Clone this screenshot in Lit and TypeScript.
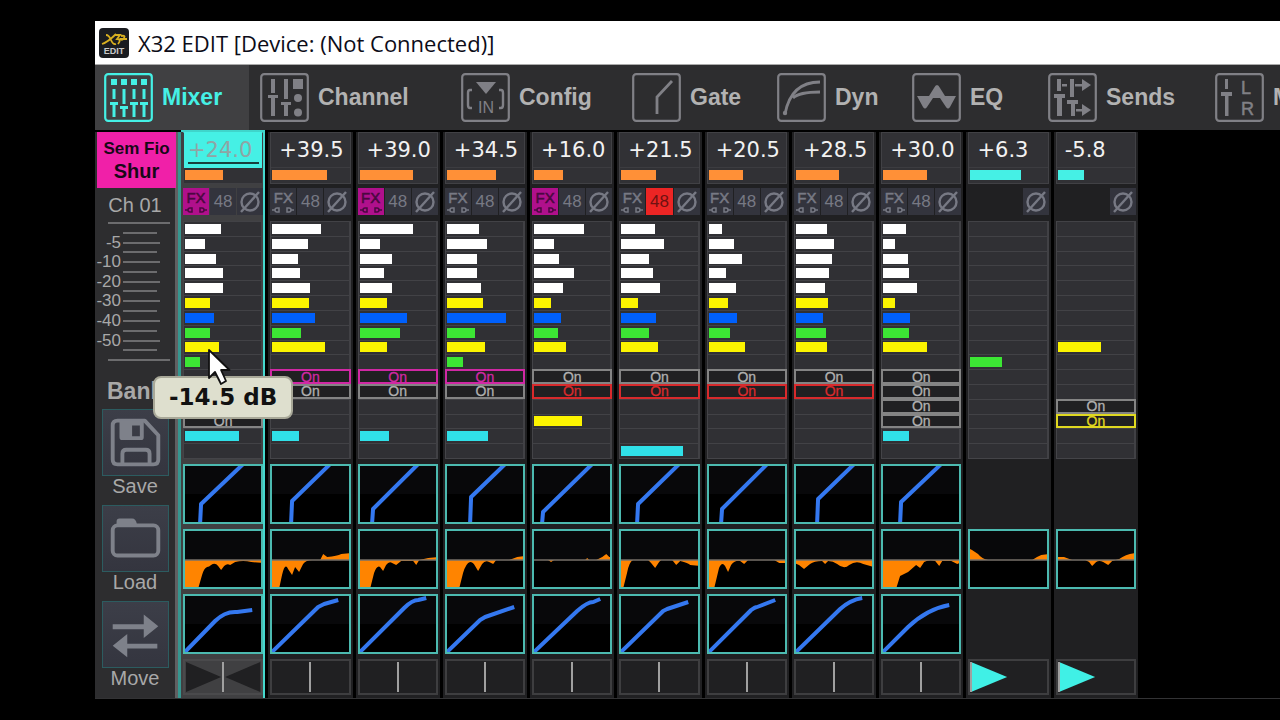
import { LitElement, html, svg, css, nothing } from "lit";
import { customElement, property } from "lit/decorators.js";
import { classMap } from "lit/directives/class-map.js";
import { styleMap } from "lit/directives/style-map.js";

type SendTone = "white" | "yellow" | "blue" | "green" | "cyan";
type Send =
  | { kind: "level"; tone: SendTone; width: number }
  | { kind: "on"; tone: "grey" | "magenta" | "red" | "gold" };

interface Channel {
  name: string;
  gain: string;
  gainBar: number;
  gainTone: "orange" | "aqua";
  preamp: boolean;
  fx?: boolean;
  phantom?: boolean;
  sends: Record<number, Send>;
  gate?: string;
  eq: string;
  dyn?: string;
  pan: number;
  selected?: boolean;
}

const TONES: SendTone[] = [
  "white", "white", "white", "white", "white",
  "yellow", "blue", "green", "yellow", "green",
];

const levels = (widths: number[]): Record<number, Send> =>
  Object.fromEntries(
    widths.map((width, i) => [i, { kind: "level", tone: TONES[i], width }]),
  );
const bar = (tone: SendTone, width: number): Send => ({ kind: "level", tone, width });
const on = (tone: "grey" | "magenta" | "red" | "gold"): Send => ({ kind: "on", tone });

const CHANNELS: Channel[] = [
  {
    name: "Ch 01", gain: "+24.0", gainBar: 38, gainTone: "orange", preamp: true, fx: true, selected: true,
    sends: { ...levels([36, 20, 31, 38, 38, 25, 29, 25, 34, 15]), 13: on("grey"), 14: bar("cyan", 54) },
    gate: "M17 60L18 40L60 0",
    eq: "M0 31V60H15L19 46Q21 39 24 38Q26 38 28 36Q32 33 35 37L38 41L41 37Q44 34 47 36L52 33Q60 31 68 33L80 34V31Z",
    dyn: "M2 58L32 27Q42 17 54 18L69 16", pan: 50,
  },
  {
    name: "Ch 02", gain: "+39.5", gainBar: 55, gainTone: "orange", preamp: true,
    sends: { ...levels([49, 36, 26, 28, 38, 37, 43, 29, 53]), 10: on("magenta"), 11: on("grey"), 14: bar("cyan", 27) },
    gate: "M21 60L22 37L60 0",
    eq: "M0 31V60H9L12 46Q15 33 18 40L22 46L25 38L29 43L33 35Q36 31 42 31H50L53 25L57 28Q67 27 71 25L80 24V31Z",
    dyn: "M2 58L48 13L54 10L68 6", pan: 50,
  },
  {
    name: "Ch 03", gain: "+39.0", gainBar: 53, gainTone: "orange", preamp: true, fx: true,
    sends: { ...levels([53, 20, 32, 24, 32, 27, 47, 40, 27]), 10: on("magenta"), 11: on("grey"), 14: bar("cyan", 29) },
    gate: "M14 60L15 45L60 0",
    eq: "M0 31V60H12L16 44Q19 36 22 38L25 42L28 36Q31 32 34 34L38 36L43 32H55L58 36L61 31L70 29L80 28V31Z",
    dyn: "M2 58L46 14Q54 6 60 6L68 4", pan: 50,
  },
  {
    name: "Ch 04", gain: "+34.5", gainBar: 49, gainTone: "orange", preamp: true,
    sends: { ...levels([32, 40, 30, 30, 34, 36, 59, 28, 38, 16]), 10: on("magenta"), 11: on("grey"), 14: bar("cyan", 41) },
    gate: "M25 60L26 33L60 0",
    eq: "M0 31V60H14L18 44Q21 34 25 33Q28 33 30 37L33 42L37 35Q40 31 44 33L48 35L51 31H64L72 28L80 27V31Z",
    dyn: "M2 58L35 26L40 23L69 13", pan: 50,
  },
  {
    name: "Ch 05", gain: "+16.0", gainBar: 29, gainTone: "orange", preamp: true, fx: true,
    sends: { ...levels([50, 20, 25, 40, 29, 17, 27, 24, 32]), 10: on("grey"), 11: on("red"), 13: bar("yellow", 48) },
    gate: "M10 60L11 48L60 0",
    eq: "M0 31H16L19 33L22 31H53L55 29L57 31H64L70 28L74 25L77 28L80 28V31Z",
    dyn: "M2 58L45 17Q55 8 61 8L68 5", pan: 50,
  },
  {
    name: "Ch 06", gain: "+21.5", gainBar: 35, gainTone: "orange", preamp: true, phantom: true,
    sends: { ...levels([34, 43, 28, 32, 39, 17, 35, 28, 37]), 10: on("grey"), 11: on("red"), 15: bar("cyan", 62) },
    gate: "M18 60L19 40L60 0",
    eq: "M0 31V60H4L8 44Q10 33 14 31H29L32 34L36 39L40 33L42 31H53L57 36L61 32Q69 34 71 36L80 37V31Z",
    dyn: "M2 58L44 17L48 15L69 8", pan: 50,
  },
  {
    name: "Ch 07", gain: "+20.5", gainBar: 34, gainTone: "orange", preamp: true,
    sends: { ...levels([13, 25, 33, 17, 27, 19, 28, 21, 36]), 10: on("grey"), 11: on("red") },
    gate: "M14 60L15 45L60 0",
    eq: "M0 31V60H7L12 39Q15 32 18 37L21 43L24 36Q28 31 33 32L37 35L41 31H67L72 34L80 34V31Z",
    dyn: "M2 58L44 16Q48 13 50 13L68 6", pan: 50,
  },
  {
    name: "Ch 08", gain: "+28.5", gainBar: 43, gainTone: "orange", preamp: true,
    sends: { ...levels([31, 38, 36, 33, 29, 32, 27, 30, 31]), 10: on("grey"), 11: on("red") },
    gate: "M23 60L24 35L60 0",
    eq: "M0 31V34L5 36L10 40L16 35Q20 32 28 32L31 35L34 32Q39 32 43 35Q50 41 55 36Q62 31 69 35L80 38V31Z",
    dyn: "M2 58L46 15Q56 6 68 4", pan: 50,
  },
  {
    name: "Ch 09", gain: "+30.0", gainBar: 44, gainTone: "orange", preamp: true,
    sends: {
      ...levels([23, 12, 25, 26, 34, 12, 27, 26, 44]),
      10: on("grey"), 11: on("grey"), 12: on("grey"), 13: on("grey"), 14: bar("cyan", 26),
    },
    gate: "M19 60L20 38L60 0",
    eq: "M0 31V60H15L19 47Q23 45 27 43L35 36L39 39L43 33Q48 30 54 32L58 37L61 32H70L76 35L80 33V31Z",
    dyn: "M2 58L27 33Q46 15 68 11", pan: 50,
  },
  {
    name: "Ch 10", gain: "+6.3", gainBar: 51, gainTone: "aqua", preamp: false,
    sends: { 9: bar("green", 32) },
    eq: "M0 31V19L4 21L10 25Q14 30 20 31H64Q68 28 73 26L80 25V31Z", pan: 0,
  },
  {
    name: "Ch 11", gain: "-5.8", gainBar: 26, gainTone: "aqua", preamp: false,
    sends: { 8: bar("yellow", 43), 12: on("grey"), 13: on("gold") },
    eq: "M0 31V28H8L16 31H29L33 33L36 37L40 33Q43 31 47 33L52 36L56 32L63 30Q70 25 80 24V31Z", pan: 0,
  },
];

const frame = svg`<rect x="1.2" y="1.2" width="46.6" height="46.6" rx="3" fill="none" stroke="currentColor" stroke-width="2.2"/>`;

const TAB_ICONS = {
  mixer: svg`${frame}<g fill="currentColor">
    <rect x="7" y="6" width="6" height="6"/><rect x="17" y="6" width="6" height="6"/><rect x="27" y="6" width="6" height="6"/><rect x="37" y="6" width="6" height="6"/>
    <rect x="8.5" y="16" width="3" height="10"/><rect x="18.5" y="16" width="3" height="15"/><rect x="28.5" y="16" width="3" height="10"/><rect x="38.5" y="16" width="3" height="10"/>
    <path d="M6 29h8v3h-2.500v12h-3V32H6zM16 33h8v3h-2.500v8h-3v-8H16zM26 29h8v3h-2.500v12h-3V32H26zM36 29h8v3h-2.500v12h-3V32H36z"/></g>`,
  channel: svg`${frame}<g fill="currentColor">
    <rect x="11" y="6" width="4" height="14"/><rect x="24" y="6" width="4" height="20"/><rect x="33" y="6" width="10" height="10"/>
    <circle cx="38" cy="25" r="4"/><circle cx="38" cy="39.500" r="4"/>
    <path d="M8 22h10v3h-3v18h-4V25H8zM21 29h10v3h-3v11h-4V32h-3z"/></g>`,
  config: svg`${frame}<path d="M15 9h20L25 21z" fill="currentColor"/>
    <path d="M11 17H9q-2 0-2 3v12q0 3 2 3h2M38 17h2q2 0 2 3v12q0 3-2 3h-2" fill="none" stroke="currentColor" stroke-width="2.400"/>
    <text x="25" y="40" text-anchor="middle" font-family="Liberation Sans, sans-serif" font-weight="400" font-size="16" fill="currentColor">IN</text>`,
  gate: svg`${frame}<path d="M25 41V24L40 8" fill="none" stroke="currentColor" stroke-width="2.800"/>`,
  dyn: svg`${frame}<path d="M8 41Q14 9 43 9M16 25Q22 19 43 19" fill="none" stroke="currentColor" stroke-width="2.800"/><circle cx="8" cy="40" r="2.200" fill="currentColor"/>`,
  eq: svg`${frame}<path d="M5 23H17L22 15Q25 9 28 15L33 23H44L38 34Q36 37 34 34L28 25H21L15 34Q13 37 11 34Z" fill="currentColor"/>`,
  sends: svg`${frame}<g fill="currentColor">
    <rect x="9" y="6" width="4" height="12"/><rect x="22" y="6" width="4" height="18"/>
    <rect x="14" y="11" width="5" height="2.500"/><rect x="27" y="11" width="7" height="2.500"/><path d="M34 6l9 6-9 6z"/>
    <path d="M6 21h11v4h-3v18H9V25H6zM19 27h11v4h-3v12h-4V31h-4z"/>
    <rect x="28" y="36" width="6" height="2.500"/><path d="M34 31l9 6-9 6z"/></g>`,
  main: svg`${frame}<g fill="currentColor"><rect x="10" y="6" width="3" height="10"/><path d="M6 19h11v4h-3.500v20h-3.500V23H6z"/>
    <g font-family="Liberation Sans, sans-serif" font-weight="400" font-size="18" stroke="currentColor" stroke-width="0.500">
    <text x="26" y="21">L</text><text x="26" y="42">R</text></g></g>`,
};

const TABS: { label: string; icon: keyof typeof TAB_ICONS }[] = [
  { label: "Mixer", icon: "mixer" },
  { label: "Channel", icon: "channel" },
  { label: "Config", icon: "config" },
  { label: "Gate", icon: "gate" },
  { label: "Dyn", icon: "dyn" },
  { label: "EQ", icon: "eq" },
  { label: "Sends", icon: "sends" },
  { label: "Main", icon: "main" },
];

@customElement("x-strip")
class ChannelStrip extends LitElement {
  @property({ attribute: false }) channel!: Channel;

  static styles = css`
    :host { display: block; }
    * { box-sizing: border-box; }
    .strip {
      display: flex;
      flex-direction: column;
      background: #202022;
      padding: 0 2px 3px;
    }
    .strip.selected {
      background: #404042;
      box-shadow: -3px 0 0 #36968f, 0 -2px 0 #3fd5cb;
      border-right: 2px solid #45d8ce;
      padding-right: 0;
    }
    .readout {
      height: 52px;
      background: #313135;
      border: 1px solid #414145;
      display: grid;
      grid-template-rows: 35px 1fr;
    }
    .gain {
      width: 100%;
      min-width: 0;
      border: 0;
      border-bottom: 1px solid #3c3c40;
      padding: 0 0 0 8px;
      background: none;
      color: #f2f2f2;
      font: 21px "DejaVu Sans", sans-serif;
      outline: none;
    }
    .selected .readout { border-color: #404044; border-top-color: #45f0e5; }
    .selected .gain {
      background: linear-gradient(#17403e, #17403e) 4px 29px / 71px 2px no-repeat, #45f0e5;
      color: #8fa5a4;
      padding-left: 4px;
      border-color: #45f0e5;
    }
    .meter { display: flex; align-items: center; padding: 0 0 2px 1px; }
    .fill { height: 10px; }
    .orange { background: #ff9037; }
    .aqua { background: #45f0e5; }
    .preamp {
      margin-top: 4px;
      height: 27px;
      display: grid;
      grid-template-columns: repeat(3, 1fr);
      gap: 1px;
    }
    .key {
      border: 0;
      padding: 0;
      background: #33343d;
      color: #777984;
      font: 17px "Liberation Sans", sans-serif;
      display: flex;
      flex-direction: column;
      align-items: center;
      justify-content: center;
    }
    .key:last-child { grid-column: 3; }
    .fx { font-size: 15px; line-height: 16px; -webkit-text-stroke: 0.5px currentColor; }
    .fx.lit { background: #b0108c; color: #4a0840; }
    .phantom.lit { background: #ec2524; color: #6e1212; }
    .key svg { display: block; }
    .sends {
      margin-top: 6px;
      height: 238px;
      display: grid;
      grid-template-rows: repeat(16, minmax(0, 1fr));
      background: #303034;
      border-bottom: 1px solid #444448;
      border-left: 1px solid #444448;
      border-right: 2px solid #414145;
    }
    .send {
      display: flex;
      align-items: center;
      border-top: 1px solid #424246;
      padding-left: 1px;
    }
    .white { background: #ffffff; }
    .yellow { background: #fcf400; }
    .blue { background: #0060fc; }
    .green { background: #3ce634; }
    .cyan { background: #30e0e8; }
    .on {
      margin: 0 -2px 0 -1px;
      padding: 0;
      border: 2px solid currentColor;
      background: #202022;
      font: 14px/10px "Liberation Sans", sans-serif;
      overflow: hidden;
      -webkit-text-stroke: 0.3px currentColor;
    }
    .grey { color: #b0b0b0; border-color: #848484; }
    .magenta { color: #d028a4; }
    .red { color: #d82a2c; }
    .gold { color: #e0d820; }
    .graphs {
      margin-top: 5px;
      display: grid;
      grid-template-rows: 60px 60px 60px 36px;
      gap: 5px;
    }
    .graph {
      border: 2px solid #4cbab0;
      padding: 0;
      background: linear-gradient(#08080a 50%, #000 50%);
      min-width: 0;
    }
    .graph svg { display: block; width: 100%; height: 100%; }
    .line { fill: none; stroke: #3478f0; stroke-width: 4; stroke-linejoin: round; }
    .pan {
      display: grid;
      border: 2px solid #3e3e40;
      background: #202022;
    }
    .selected .pan { border-color: #4a4a4c; background: #404042; }
    .pan svg, .pan input { grid-area: 1 / 1; width: 100%; height: 32px; }
    .pan input {
      appearance: none;
      -webkit-appearance: none;
      margin: 0;
      background: none;
    }
    .pan input::-webkit-slider-thumb {
      -webkit-appearance: none;
      width: 2px;
      height: 30px;
      background: #a0a0a0;
    }
  `;

  private send(index: number) {
    const send = this.channel.sends[index];
    if (!send) return html`<div class="send"></div>`;
    if (send.kind === "on") return html`<button class="on ${send.tone}">On</button>`;
    return html`<div class="send">
      <div class="fill ${send.tone}" style=${styleMap({ width: `${send.width}px` })}></div>
    </div>`;
  }

  private graph(label: string, content: unknown) {
    return html`<button class="graph" aria-label=${label}>
      <svg viewBox="2 2 76 56" preserveAspectRatio="none">${content}</svg>
    </button>`;
  }

  render() {
    const c = this.channel;
    return html`
      <section class=${classMap({ strip: true, selected: !!c.selected })} aria-label=${c.name}>
        <div class="readout">
          <input class="gain" aria-label="${c.name} gain" .value=${c.gain} />
          <div class="meter">
            <div class="fill ${c.gainTone}" style=${styleMap({ width: `${c.gainBar}px` })}></div>
          </div>
        </div>
        <div class="preamp">
          ${c.preamp
            ? html`<button class=${classMap({ key: true, fx: true, lit: !!c.fx })}>
                  FX
                  <svg width="26" height="8" viewBox="0 0 26 8" fill="none" stroke="currentColor" stroke-width="1.500">
                    <path d="M2 4h3M9 2H7Q5 2 5 4T7 6H9zM17 2h2Q21 2 21 4T19 6H17zM21 4h3" />
                  </svg>
                </button>
                <button class=${classMap({ key: true, phantom: true, lit: !!c.phantom })}>48</button>`
            : nothing}
          <button class="key" aria-label="Phase">
            <svg width="26" height="26" viewBox="0 0 26 26" fill="none" stroke="currentColor" stroke-width="2.400">
              <circle cx="13" cy="13" r="8.500" /><path d="M4 23L22 3" />
            </svg>
          </button>
        </div>
        <div class="sends">${Array.from({ length: 16 }, (_, i) => this.send(i))}</div>
        <div class="graphs">
          ${c.gate ? this.graph("Gate", svg`<path class="line" d=${c.gate} />`) : html`<div></div>`}
          ${this.graph("EQ", svg`<path d=${c.eq} fill="#ff8400" /><path d="M0 31H80" stroke="#77706a" stroke-width="1.500" />`)}
          ${c.dyn ? this.graph("Dyn", svg`<path class="line" d=${c.dyn} />`) : html`<div></div>`}
          <div class="pan">
            <svg viewBox="0 0 76 32" preserveAspectRatio="none">
              ${c.selected ? svg`<path d="M1 1L36 16L1 31zM75 1L40 16L75 31z" fill="#202022" />` : nothing}
              ${c.pan === 0 ? svg`<path d="M1 1L37 16L1 31z" fill="#40f0e6" />` : nothing}
            </svg>
            <input type="range" min="0" max="100" .value=${String(c.pan)} aria-label="${c.name} pan" />
          </div>
        </div>
      </section>
    `;
  }
}

@customElement("app-root")
class AppRoot extends LitElement {
  static styles = css`
    :host {
      display: block;
      box-sizing: border-box;
      min-height: 100vh;
      padding: 21px 0 0 95px;
      background: #000;
      overflow: hidden;
      font-family: "Liberation Sans", Arial, sans-serif;
    }
    * { box-sizing: border-box; }
    .titlebar {
      height: 44px;
      background: #fff;
      color: #0c0c18;
      display: flex;
      align-items: center;
      gap: 9px;
      padding-left: 4px;
      border-bottom: 1px solid #aaa;
    }
    .title { margin: 0; font: 22px "Open Sans", sans-serif; white-space: nowrap; }
    .tabs {
      height: 65px;
      display: grid;
      grid-template-columns: 156px 201px 171px 145px 135px 136px 167px 167px;
      background: #2d2d2f;
      overflow: hidden;
    }
    .tab {
      border: 0;
      background: none;
      color: #b2b2b2;
      font: bold 23px "Liberation Sans", Arial, sans-serif;
      display: flex;
      align-items: center;
      gap: 9px;
      padding: 0 0 0 9px;
    }
    .tab svg { color: #808086; flex: none; }
    .tab.active, .tab.active svg { color: #45f0e5; }
    .tab.active { background: #404042; margin-right: 2px; }
    .body { display: flex; padding-top: 2px; border-bottom: 1px solid #333335; }
    .side {
      width: 83px;
      flex: none;
      background: #2d2d2f;
      color: #a8a8a8;
      border-right: 3px solid #606062;
      font-size: 20px;
      display: flex;
      flex-direction: column;
      align-items: center;
      text-align: center;
    }
    .scribble {
      align-self: stretch;
      margin: 0 -1px 0 2px;
      height: 56px;
      background: #f020a8;
      color: #180818;
      font-weight: bold;
      font-size: 20px;
      line-height: 22px;
      padding-top: 6px;
    }
    .first { display: block; font-size: 17px; }
    .number { padding-top: 4px; line-height: 26px; }
    .scale {
      align-self: stretch;
      height: 147px;
      display: grid;
      grid-template-rows: repeat(15, minmax(0, 1fr));
      font-size: 17px;
    }
    .tick {
      display: grid;
      grid-template-columns: 26px 1fr;
      gap: 2px;
      align-items: center;
      line-height: 10px;
      text-align: right;
    }
    .tick::after { content: ""; width: 34px; height: 2px; background: #6c6c6e; grid-column: 2; }
    .tick.major::after { width: 37px; }
    .tick.end::after { width: 62px; grid-column: 1 / 3; margin-left: 13px; }
    .bank {
      align-self: flex-start;
      margin: 11px 0 3px 12px;
      font-size: 23px;
      line-height: 30px;
      font-weight: bold;
    }
    .tool {
      border: 0;
      background: none;
      padding: 0;
      color: inherit;
      font: 20px/20px "Liberation Sans", Arial, sans-serif;
      display: flex;
      flex-direction: column;
      align-items: center;
      height: 96px;
      width: 67px;
    }
    .tool svg {
      border: 1px solid #2c5c60;
      background: linear-gradient(#3c3e48, #34353f);
      color: #7e818a;
      display: block;
      flex: none;
    }
    .strips {
      display: grid;
      grid-template-columns: repeat(11, minmax(0, 1fr));
      gap: 3px;
      flex: 0 0 957px;
      margin-left: 3px;
    }
    .tooltip {
      position: absolute;
      left: 153px;
      top: 376px;
      padding: 7px 14px;
      border: 2px solid #a8a898;
      border-radius: 8px;
      background: #dedfce;
      color: #111;
      font: bold 23px/25px "DejaVu Sans", sans-serif;
    }
    .cursor { position: absolute; left: 206px; top: 346px; }
  `;

  private tool(label: string, icon: unknown) {
    return html`<button class="tool">
      <svg width="67" height="67" viewBox="0 0 67 67">${icon}</svg>
      ${label}
    </button>`;
  }

  render() {
    const ticks = ["end", "", "-5", "", "-10", "", "-20", "", "-30", "", "-40", "", "-50", "", "end"];
    return html`
      <header class="titlebar">
        <svg width="30" height="30" viewBox="0 0 30 30">
          <rect width="30" height="30" rx="4" fill="#1a1c20" />
          <path d="M3 16Q9 14 17 6M7 7Q10 7 12 12T17 16M16 7h5l-3 4q5 0 1 5M22 8q5-1 3 2t-3 1h6" fill="none" stroke="#d8b020" stroke-width="1.800" />
          <text x="15" y="26" text-anchor="middle" font-family="Liberation Sans, sans-serif" font-weight="bold" font-size="9" fill="#c8c8c8">EDIT</text>
        </svg>
        <h1 class="title">X32 EDIT [Device: (Not Connected)]</h1>
      </header>
      <nav class="tabs">
        ${TABS.map(
          (tab, i) => html`<button class=${classMap({ tab: true, active: i === 0 })}>
            <svg width="49" height="49" viewBox="0 0 49 49">${TAB_ICONS[tab.icon]}</svg>${tab.label}
          </button>`,
        )}
      </nav>
      <main class="body">
        <aside class="side">
          <div class="scribble"><span class="first">Sem Fio</span>Shur</div>
          <div class="number">Ch 01</div>
          <div class="scale">
            ${ticks.map(
              (t) => html`<div class=${classMap({ tick: true, end: t === "end", major: t.startsWith("-") })}>${t === "end" ? nothing : html`<span>${t}</span>`}</div>`,
            )}
          </div>
          <div class="bank">Bank</div>
          ${this.tool("Save", svg`<g fill="none" stroke="currentColor" stroke-width="4" stroke-linejoin="round">
            <path d="M15 11H43L57 26V51Q57 56 52 56H15Q10 56 10 51V16Q10 11 15 11z" />
            <path d="M20 56V45Q20 41 24 41H44Q48 41 48 45V56" /></g>
            <path fill-rule="evenodd" d="M17 11H42V28Q42 31 39 31H20Q17 31 17 28zM30 16V27H38V16z" fill="currentColor" />`)}
          ${this.tool("Load", svg`<path d="M14 21V16Q14 13 17 13H30Q34 13 35 19L36 21z" fill="currentColor" />
            <rect x="10" y="20" width="47" height="31" rx="5" fill="none" stroke="currentColor" stroke-width="4" />`)}
          ${this.tool("Move", svg`<path d="M10 23H42V13L57 25L42 37V28H10zM56 43H25V33L10 45L25 57V48H56z" fill="currentColor" />`)}
        </aside>
        <div class="strips">
          ${CHANNELS.map((c) => html`<x-strip .channel=${c}></x-strip>`)}
        </div>
      </main>
      <div class="tooltip" role="tooltip">-14.5 dB</div>
      <svg class="cursor" width="26" height="40" viewBox="0 0 26 40">
        <path d="M3 4V32L9 26L15 38L20 35L15 24H23.500z" fill="#fff" stroke="#111" stroke-width="1.800" stroke-linejoin="round" />
      </svg>
    `;
  }
}
